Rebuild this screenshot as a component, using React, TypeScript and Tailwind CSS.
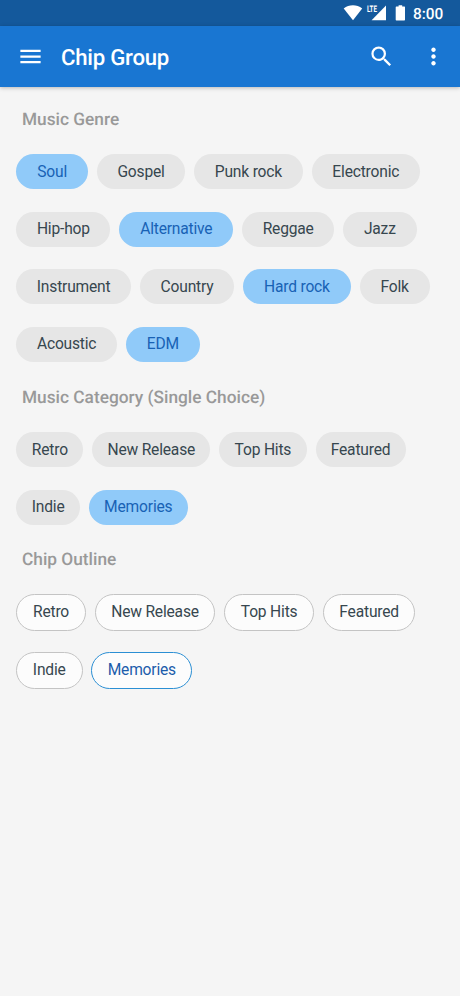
import React from 'react';

type Item = { label: string; width: string; on?: boolean };

const genres: Item[][] = [
  [
    { label: 'Soul', width: 'w-[71.5px]', on: true },
    { label: 'Gospel', width: 'w-[88.5px]' },
    { label: 'Punk rock', width: 'w-[108.5px]' },
    { label: 'Electronic', width: 'w-[108.5px]' },
  ],
  [
    { label: 'Hip-hop', width: 'w-[94px]' },
    { label: 'Alternative', width: 'w-[114px]', on: true },
    { label: 'Reggae', width: 'w-[92px]' },
    { label: 'Jazz', width: 'w-[73.5px]' },
  ],
  [
    { label: 'Instrument', width: 'w-[114.5px]' },
    { label: 'Country', width: 'w-[94.5px]' },
    { label: 'Hard rock', width: 'w-[107.5px]', on: true },
    { label: 'Folk', width: 'w-[70px]' },
  ],
  [
    { label: 'Acoustic', width: 'w-[100.5px]' },
    { label: 'EDM', width: 'w-[74px]', on: true },
  ],
];

const categories: Item[][] = [
  [
    { label: 'Retro', width: 'w-[67px]' },
    { label: 'New Release', width: 'w-[118px]' },
    { label: 'Top Hits', width: 'w-[87.5px]' },
    { label: 'Featured', width: 'w-[90px]' },
  ],
  [
    { label: 'Indie', width: 'w-[63.5px]' },
    { label: 'Memories', width: 'w-[99px]', on: true },
  ],
];

const outlines: Item[][] = [
  [
    { label: 'Retro', width: 'w-[70px]' },
    { label: 'New Release', width: 'w-[120.5px]' },
    { label: 'Top Hits', width: 'w-[90px]' },
    { label: 'Featured', width: 'w-[92.5px]' },
  ],
  [
    { label: 'Indie', width: 'w-[66.5px]' },
    { label: 'Memories', width: 'w-[101px]', on: true },
  ],
];

function Chip({ item, outline }: { item: Item; outline?: boolean }) {
  const look = outline
    ? item.on
      ? 'h-[37px] border-[1.3px] border-[#2b8fd4] bg-[#fcfcfc] text-[#1c5cab]'
      : 'h-[37px] border-[1.3px] border-[#c4c4c4] bg-[#fcfcfc] text-[#37474f]'
    : item.on
      ? 'h-[35px] bg-[#90caf9] pt-px text-[#1862b5]'
      : 'h-[35px] bg-[#e6e6e6] pt-px text-[#37474f]';
  return (
    <button
      className={`flex shrink-0 items-center justify-center rounded-full text-[15.6px] leading-[17px] tracking-[-0.19px] whitespace-nowrap ${item.width} ${look}`}
    >
      {item.label}
    </button>
  );
}

function ChipRows({ rows, outline }: { rows: Item[][]; outline?: boolean }) {
  return (
    <div className={outline ? 'flex flex-col pl-4' : 'flex flex-col pl-[16.4px]'}>
      {rows.map((row, i) => (
        <div key={i} className={`flex h-[57.5px] items-start ${outline ? 'gap-[8.8px]' : 'gap-[8.9px]'}`}>
          {row.map((item) => (
            <Chip key={item.label} item={item} outline={outline} />
          ))}
        </div>
      ))}
    </div>
  );
}

function Heading({ children }: { children: React.ReactNode }) {
  return (
    <h2 className="h-5 pt-px pl-[22px] text-[17.3px] leading-5 font-medium text-[#999999]">
      {children}
    </h2>
  );
}

export default function App() {
  return (
    <div className="flex h-[996px] w-[460px] flex-col overflow-hidden bg-[#f5f5f5] font-['Roboto',sans-serif] [text-rendering:geometricPrecision]">
      <div className="flex h-[26px] shrink-0 items-center justify-end bg-[#14599c] pr-[17px] text-white">
        <svg width="70" height="26" viewBox="0 0 70 26" fill="currentColor">
          <path d="M.7 8.5C6 4.2 13.8 4.2 19.2 8.5L10 20.3Z" />
          <path d="M43 5.6V20.3H28.6Z" />
          <rect x="23" y="4" width="12" height="9.5" fill="#14599c" />
          <text x="23.9" y="12.4" fontSize="9" fontWeight="700" textLength="10" lengthAdjust="spacingAndGlyphs">
            LTE
          </text>
          <path d="M53.4 6.6H55.6V5.2H59.2V6.6H61.5Q62 6.6 62 7.2V19.8Q62 20.6 61.3 20.6H53.4Q52.7 20.6 52.7 19.8V7.2Q52.7 6.6 53.4 6.6Z" />
        </svg>
        <span className="w-[30px] pt-[3px] text-[15.4px] leading-none font-medium whitespace-nowrap">8:00</span>
      </div>
      <header className="z-10 flex h-[61px] shrink-0 items-center bg-[#1976d2] pl-[17px] text-white shadow-[0_1px_4px_rgba(0,0,0,0.25)]">
        <svg width="27" height="27" viewBox="0 0 24 24" fill="currentColor">
          <path d="M3 18h18v-2H3v2zm0-5h18v-2H3v2zm0-7v2h18V6H3z" />
        </svg>
        <h1 className="ml-[17px] flex-1 pt-[2px] text-[22.2px] leading-7 font-medium tracking-[-0.25px]">Chip Group</h1>
        <svg width="27" height="27" viewBox="0 0 24 24" fill="currentColor">
          <path d="M15.5 14h-.79l-.28-.27A6.471 6.471 0 0 0 16 9.5 6.5 6.5 0 1 0 9.5 16c1.61 0 3.09-.59 4.23-1.57l.27.28v.79l5 4.99L20.49 19l-4.99-5zm-6 0C7.01 14 5 11.99 5 9.5S7.01 5 9.5 5 14 7.01 14 9.5 11.99 14 9.5 14z" />
        </svg>
        <svg width="27" height="27" viewBox="0 0 24 24" fill="currentColor" className="mr-[13px] ml-[25px]">
          <path d="M12 8c1.1 0 2-.9 2-2s-.9-2-2-2-2 .9-2 2 .9 2 2 2zm0 2c-1.1 0-2 .9-2 2s.9 2 2 2 2-.9 2-2-.9-2-2-2zm0 6c-1.1 0-2 .9-2 2s.9 2 2 2 2-.9 2-2-.9-2-2-2z" />
        </svg>
      </header>
      <main className="flex flex-col">
        <section className="flex h-[300px] flex-col gap-[25px] pt-[22px]">
          <Heading>Music Genre</Heading>
          <ChipRows rows={genres} />
        </section>
        <section className="flex h-[162px] flex-col gap-[25px]">
          <Heading>Music Category (Single Choice)</Heading>
          <ChipRows rows={categories} />
        </section>
        <section className="flex flex-col gap-[25px]">
          <Heading>Chip Outline</Heading>
          <ChipRows rows={outlines} outline />
        </section>
      </main>
    </div>
  );
}
